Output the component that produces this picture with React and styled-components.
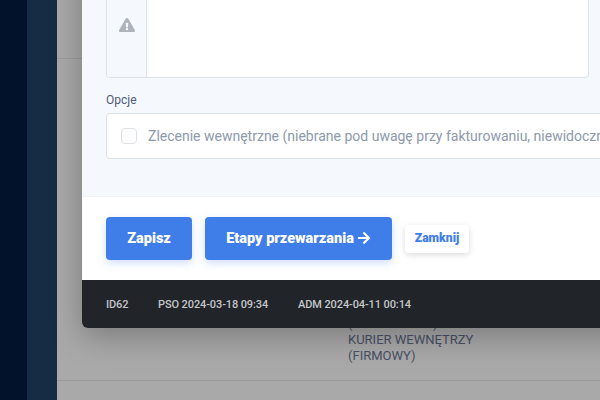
import React from "react";
import styled, { createGlobalStyle } from "styled-components";
import { FaExclamationTriangle, FaArrowRight } from "react-icons/fa";

const GlobalStyle = createGlobalStyle`
  html, body {
    margin: 0;
    padding: 0;
    height: 100%;
    overflow: hidden;
    font-family: Roboto, "Liberation Sans", sans-serif;
  }
`;

const Root = styled.div`
  display: flex;
  position: relative;
  width: 600px;
  height: 400px;
  overflow: hidden;
`;

const Rail = styled.div`
  width: 27px;
  background: #02122a;
`;

const Sidebar = styled.div`
  width: 30px;
  background: #162c45;
`;

const Backdrop = styled.div`
  flex: 1;
  position: relative;
  background: #a9a9a9;
`;

const TableRow = styled.div`
  box-sizing: border-box;
  height: ${(p) => p.$height}px;
  border-bottom: 1px solid #9b9b9b;
  padding: ${(p) => p.$top}px 0 0 291px;
  font-size: 13px;
  line-height: 16px;
  color: #4a5068;
`;

const Modal = styled.div`
  position: absolute;
  left: 25px;
  top: -60px;
  width: 720px;
  height: 388px;
  display: flex;
  flex-direction: column;
  border-radius: 6px;
  overflow: hidden;
  box-shadow: 0 8px 32px rgba(0, 0, 0, 0.28);
`;

const Form = styled.div`
  height: 257px;
  box-sizing: border-box;
  padding: 0 0 0 24px;
  background: #f5f8fc;
  border-bottom: 1px solid #eef1f5;
`;

const TextGroup = styled.div`
  display: flex;
  width: 483px;
  height: 138px;
  box-sizing: border-box;
  background: #fff;
  border: 1px solid #dde2e8;
  border-radius: 4px;
  overflow: hidden;
`;

const Addon = styled.div`
  width: 39px;
  display: flex;
  justify-content: center;
  box-sizing: content-box;
  background: #f5f8fc;
  border-right: 1px solid #dde2e8;
  color: #acb3bb;
  font-size: 16px;
  padding-top: 76px;
`;

const Label = styled.div`
  margin: 15px 0 6px;
  font-size: 12px;
  line-height: 14px;
  color: #4f5b78;
`;

const OptionBox = styled.div`
  display: flex;
  align-items: center;
  gap: 11px;
  height: 46px;
  box-sizing: border-box;
  padding-left: 14px;
  background: #fff;
  border: 1px solid #dde2e8;
  border-radius: 4px;
  white-space: nowrap;
  overflow: hidden;
`;

const Check = styled.span`
  flex: none;
  width: 16px;
  height: 16px;
  box-sizing: border-box;
  background: #fff;
  border: 1px solid #dde2e8;
  border-radius: 4px;
`;

const OptionText = styled.span`
  font-size: 14px;
  color: #8d99ab;
`;

const Actions = styled.div`
  flex: 1;
  display: flex;
  align-items: center;
  gap: 13px;
  padding: 0 0 0 24px;
  background: #fff;
`;

const Primary = styled.button`
  display: flex;
  align-items: center;
  justify-content: center;
  gap: 3px;
  width: ${(p) => p.$width}px;
  height: 43px;
  padding: 0 0 1px;
  border: 0;
  border-radius: 4px;
  background: #3f7de8;
  color: #fff;
  font: 900 14.5px Roboto, sans-serif;
  box-shadow: 0 3px 8px rgba(63, 125, 232, 0.25);
`;

const Secondary = styled.button`
  width: 64px;
  height: 28px;
  padding: 0 0 1px;
  border: 0;
  border-radius: 4px;
  background: #fff;
  color: #3f7de8;
  font: 900 12.2px Roboto, sans-serif;
  box-shadow: 0 2px 6px rgba(0, 0, 0, 0.14);
`;

const Footer = styled.div`
  display: flex;
  align-items: center;
  height: 48px;
  flex: none;
  padding-left: 24px;
  background: #212429;
  color: #c4c6c9;
  font-size: 11px;
  font-weight: 500;
  letter-spacing: -0.1px;
`;

const Stamp = styled.span`
  width: ${(p) => p.$width}px;
`;

export default function App() {
  return (
    <>
      <GlobalStyle />
      <Root>
        <Rail />
        <Sidebar />
        <Backdrop>
          <TableRow $height={59} $top={0} />
          <TableRow $height={322} $top={257}>
            <div>(PRZEWOŹNIK)</div>
            <div>KURIER WEWNĘTRZY</div>
            <div>(FIRMOWY)</div>
          </TableRow>
          <Modal>
            <Form>
              <TextGroup>
                <Addon>
                  <FaExclamationTriangle />
                </Addon>
              </TextGroup>
              <Label>Opcje</Label>
              <OptionBox>
                <Check />
                <OptionText>
                  Zlecenie wewnętrzne (niebrane pod uwagę przy fakturowaniu, niewidoczne dla klienta)
                </OptionText>
              </OptionBox>
            </Form>
            <Actions>
              <Primary $width={86}>Zapisz</Primary>
              <Primary $width={187}>
                Etapy przewarzania <FaArrowRight size={14} />
              </Primary>
              <Secondary>Zamknij</Secondary>
            </Actions>
            <Footer>
              <Stamp $width={52}>ID62</Stamp>
              <Stamp $width={140}>PSO 2024-03-18 09:34</Stamp>
              <Stamp $width={140}>ADM 2024-04-11 00:14</Stamp>
            </Footer>
          </Modal>
        </Backdrop>
      </Root>
    </>
  );
}
